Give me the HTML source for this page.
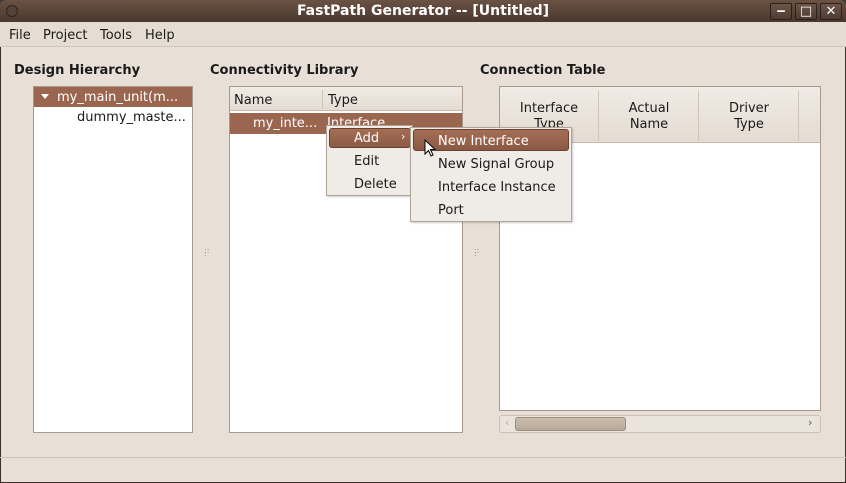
<!DOCTYPE html>
<html><head><style>
*{margin:0;padding:0;box-sizing:border-box}
body{width:846px;height:483px;background:#3c3b37;font-family:"DejaVu Sans","Liberation Sans",sans-serif;font-size:13px;color:#1a1a1a;position:relative;overflow:hidden}
.a{position:absolute}
.t{position:absolute;margin-top:1px}
.win{left:0;top:0;width:846px;height:483px;background:#e8e0d7;border:1px solid #3a2e28;border-radius:6px 6px 0 0}
.title{left:0;top:0;width:846px;height:22px;background:linear-gradient(#6a5244,#4a382e);border-radius:6px 6px 0 0;color:#fff;font-weight:bold;text-align:center;line-height:22px;font-size:14px}
.wb{top:3px;width:22px;height:17px;border:1px solid #2a201b;background:linear-gradient(#6e5548,#4e3c33);border-radius:2px;color:#fff;text-align:center;line-height:15px;font-weight:bold;font-size:13px}
.menu{left:0;top:22px;width:846px;height:25px;background:#e6ddd2;border-bottom:1px solid #d2c6b9}
.menu span{position:absolute;top:6px;font-size:13px}
.lbl{font-weight:bold;font-size:13px}
.box{background:#fff;border:1px solid #a8998b}
.sel{background:#9a6650;color:#fff}
.hdr{background:linear-gradient(#f0ebe5,#e4dcd2);border-bottom:1px solid #c9bdb0}
.mn{background:#efebe6;border:1px solid #b0a496;box-shadow:1px 1px 2px rgba(0,0,0,.2)}
.hi{background:linear-gradient(#a56e55,#8b5a44);color:#fff;border:1px solid #6a4232;border-radius:3px}
</style></head><body>
<div class="a win"></div>
<div class="a title">FastPath Generator -- [Untitled]</div>
<div class="a" style="left:6px;top:5px;width:12px;height:12px;border-radius:50%;border:1px solid #2c2420;background:#55433a"></div>
<div class="a wb" style="left:770px">&#8210;</div>
<div class="a wb" style="left:795px">&#9633;</div>
<div class="a wb" style="left:820px">&#10005;</div>
<div class="a menu"><span style="left:9px">File</span><span style="left:43px">Project</span><span style="left:100px">Tools</span><span style="left:145px">Help</span></div>

<div class="t lbl" style="left:14px;top:62px">Design Hierarchy</div>
<div class="t lbl" style="left:210px;top:62px">Connectivity Library</div>
<div class="t lbl" style="left:480px;top:62px">Connection Table</div>

<div class="a box" style="left:33px;top:86px;width:160px;height:347px"></div>
<div class="a sel" style="left:34px;top:87px;width:158px;height:20px"></div>
<div class="a" style="left:41px;top:94px;width:0;height:0;border-left:4px solid transparent;border-right:4px solid transparent;border-top:5px solid #fff"></div>
<div class="t" style="left:57px;top:89px;color:#fff">my_main_unit(m...</div>
<div class="t" style="left:77px;top:109px">dummy_maste...</div>

<div class="a box" style="left:229px;top:86px;width:234px;height:347px"></div>
<div class="a hdr" style="left:230px;top:87px;width:232px;height:24px"></div>
<div class="a" style="left:322px;top:90px;width:1px;height:19px;background:#cfc4b8"></div>
<div class="t" style="left:234px;top:92px">Name</div>
<div class="t" style="left:328px;top:92px">Type</div>
<div class="a sel" style="left:230px;top:113px;width:232px;height:21px"></div>
<div class="t" style="left:253px;top:115px;color:#fff">my_inte...</div>
<div class="t" style="left:327px;top:115px;color:#fff">Interface</div>

<div class="a box" style="left:499px;top:86px;width:322px;height:325px"></div>
<div class="a hdr" style="left:500px;top:87px;width:320px;height:56px"></div>
<div class="a" style="left:598px;top:91px;width:1px;height:50px;background:#cfc4b8"></div>
<div class="a" style="left:698px;top:91px;width:1px;height:50px;background:#cfc4b8"></div>
<div class="a" style="left:798px;top:91px;width:1px;height:50px;background:#cfc4b8"></div>
<div class="t" style="left:500px;top:100px;width:98px;text-align:center;line-height:16px">Interface<br>Type</div>
<div class="t" style="left:600px;top:100px;width:98px;text-align:center;line-height:16px">Actual<br>Name</div>
<div class="t" style="left:700px;top:100px;width:98px;text-align:center;line-height:16px">Driver<br>Type</div>
<div class="a" style="left:499px;top:415px;width:322px;height:18px;background:#ebe4dc;border:1px solid #cbbfb2;border-radius:3px"></div>
<div class="a" style="left:515px;top:417px;width:111px;height:14px;background:linear-gradient(#cbbcae,#b9a999);border:1px solid #9d8d7e;border-radius:3px"></div>
<div class="a" style="left:505px;top:416px;font-size:11px;color:#b0a496">&#8249;</div>
<div class="a" style="left:808px;top:416px;font-size:11px;color:#555">&#8250;</div>

<div class="a" style="left:204px;top:249px;font-size:8px;color:#9a8c7e;line-height:3px">::<br>:</div>
<div class="a" style="left:474px;top:249px;font-size:8px;color:#9a8c7e;line-height:3px">::<br>:</div>

<div class="a" style="left:0;top:457px;width:846px;height:1px;background:#cfc3b6"></div>

<div class="a mn" style="left:326px;top:125px;width:87px;height:71px"></div>
<div class="a hi" style="left:329px;top:128px;width:82px;height:20px"></div>
<div class="t" style="left:354px;top:130px;color:#fff">Add</div>
<div class="t" style="left:401px;top:129px;color:#fff;font-size:11px">&#8250;</div>
<div class="t" style="left:354px;top:153px">Edit</div>
<div class="t" style="left:354px;top:176px">Delete</div>

<div class="a mn" style="left:410px;top:127px;width:162px;height:95px"></div>
<div class="a hi" style="left:413px;top:129px;width:156px;height:22px"></div>
<div class="t" style="left:438px;top:133px;color:#fff">New Interface</div>
<div class="t" style="left:438px;top:156px">New Signal Group</div>
<div class="t" style="left:438px;top:179px">Interface Instance</div>
<div class="t" style="left:438px;top:202px">Port</div>
<svg class="a" style="left:424px;top:139px" width="14" height="20"><path d="M1 1 L1 15 L4.5 11.5 L7 17 L9 16 L6.5 10.5 L11 10.5 Z" fill="#fff" stroke="#000" stroke-width="1"/></svg>
</body></html>
